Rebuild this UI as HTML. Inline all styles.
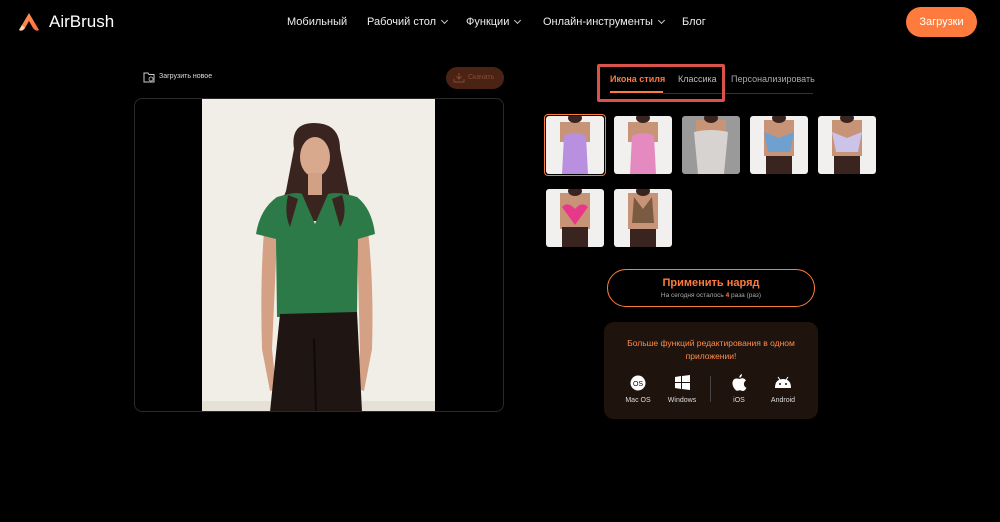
<!DOCTYPE html>
<html><head><meta charset="utf-8"><style>
*{margin:0;padding:0;box-sizing:border-box}
body{width:1000px;height:522px;background:#000;color:#fff;font-family:"Liberation Sans",sans-serif;position:relative;overflow:hidden}
.a{position:absolute}
.nav{font-size:11px;color:#eee;top:16px}
.chev{display:inline-block;width:5px;height:5px;border-right:1.2px solid #ccc;border-bottom:1.2px solid #ccc;transform:rotate(45deg);margin-left:6px;position:relative;top:-2px}
.th{position:absolute;width:58px;height:58px;border-radius:3px;overflow:hidden;background:#f1f0ee}
.tab{font-size:9px;top:74px}
.ic{position:absolute;top:374px;text-align:center;font-size:7px;color:#ddd;width:50px}
</style></head><body>
<svg class="a" style="left:18px;top:12px" width="22" height="20" viewBox="0 0 22 20"><defs><linearGradient id="lg" x1="0" y1="0" x2="1" y2="1"><stop offset="0" stop-color="#ff9a5a"/><stop offset="1" stop-color="#ff6a3a"/></linearGradient></defs><path d="M11 1 L21 18 Q18 20 15 16 L11 9 L7 16 Q4 20 1 18 Z" fill="url(#lg)"/><path d="M7 16 Q4 20 1 18 L4 13Z" fill="#ffd1b0"/></svg>
<div class="a" style="left:49px;top:12px;font-size:17px;color:#fff">AirBrush</div>
<div class="a nav" style="left:287px">Мобильный</div>
<div class="a nav" style="left:367px">Рабочий стол<span class="chev"></span></div>
<div class="a nav" style="left:466px">Функции<span class="chev"></span></div>
<div class="a nav" style="left:543px">Онлайн-инструменты<span class="chev"></span></div>
<div class="a nav" style="left:682px">Блог</div>
<div class="a" style="left:906px;top:7px;width:71px;height:30px;border-radius:15px;background:#ff7b3d;font-size:11px;line-height:30px;text-align:center">Загрузки</div>

<svg class="a" style="left:143px;top:72px" width="12" height="11" viewBox="0 0 12 11"><path d="M1 1h4l1 1.5h5v7.5H1Z" fill="none" stroke="#ccc" stroke-width="1"/><circle cx="8" cy="7" r="2" fill="none" stroke="#ccc" stroke-width=".8"/></svg>
<div class="a" style="left:159px;top:73px;font-size:7px;color:#ddd">Загрузить новое</div>
<div class="a" style="left:446px;top:67px;width:58px;height:22px;border-radius:11px;background:#4a2315;font-size:7px;color:#8a4a30;line-height:22px;padding-left:22px">Скачать</div>
<svg class="a" style="left:453px;top:72px" width="12" height="11" viewBox="0 0 12 11"><path d="M6 1v6M3.5 4.5 6 7l2.5-2.5M1 7v3h10V7" fill="none" stroke="#8a4a30" stroke-width="1"/></svg>

<div class="a" style="left:134px;top:98px;width:370px;height:314px;border:1px solid #2a2a2a;border-radius:8px;overflow:hidden;background:#000">
<svg class="a" style="left:67px;top:0" width="233" height="313" viewBox="0 0 233 313">
<rect width="233" height="313" fill="#f1eee7"/>
<rect y="302" width="233" height="11" fill="#e6e1d6"/>
<path d="M92 50 Q88 24 112 24 Q138 24 138 50 L146 90 Q152 115 142 122 L85 122 Q76 110 84 92Z" fill="#3a2420"/>
<ellipse cx="113" cy="58" rx="15" ry="20" fill="#d9a98d"/>
<rect x="106" y="74" width="14" height="22" fill="#d2a085"/>
<path d="M62 132 Q58 185 60 250 L68 292 L74 290 L70 250 L75 140Z" fill="#d4a184"/>
<path d="M166 132 Q172 185 170 250 L162 292 L156 290 L158 250 L155 140Z" fill="#d4a184"/>
<path d="M75 98 Q95 92 100 95 L113 125 L126 95 Q135 92 155 98 Q170 110 173 135 L156 140 L155 215 L75 218 L74 140 L54 135 Q58 110 75 98Z" fill="#2c7a48"/>
<path d="M86 96 Q82 115 88 128 L96 100Z M140 96 Q146 115 138 128 L130 100Z" fill="#3a2420"/>
<path d="M78 215 L155 213 L160 313 L68 313Z" fill="#1f1513"/>
<path d="M112 240 L114 313" stroke="#0f0908" stroke-width="2"/>
</svg>
</div>

<div class="a tab" style="left:610px;color:#ff7b3d;font-weight:bold">Икона стиля</div>
<div class="a" style="left:610px;top:91px;width:53px;height:2px;background:#ff7b3d"></div>
<div class="a tab" style="left:678px;color:#bbb">Классика</div>
<div class="a tab" style="left:731px;color:#aaa">Персонализировать</div>
<div class="a" style="left:663px;top:93px;width:150px;height:1px;background:#333"></div>
<div class="a" style="left:597px;top:64px;width:128px;height:38px;border:3px solid #d9534a;border-radius:2px"></div>

<div class="a" style="left:544px;top:114px;width:62px;height:62px;border:1.5px solid #ff7b3d;border-radius:4px"></div>
<div class="th" style="left:546px;top:116px"><svg width="58" height="58"><rect x="14" y="6" width="30" height="20" fill="#c89478"/><path d="M18 20 Q29 14 40 20 L42 58 L16 58Z" fill="#b98fe0"/><ellipse cx="29" cy="2" rx="7" ry="5" fill="#3a2420"/></svg></div>
<div class="th" style="left:614px;top:116px"><svg width="58" height="58"><rect x="14" y="6" width="30" height="20" fill="#c89478"/><path d="M18 20 Q29 14 40 20 L42 58 L16 58Z" fill="#e58ac0"/><ellipse cx="29" cy="2" rx="7" ry="5" fill="#3a2420"/></svg></div>
<div class="th" style="left:682px;top:116px;background:#9a9a9a"><svg width="58" height="58"><rect x="14" y="4" width="30" height="16" fill="#c89478"/><path d="M12 16 Q29 12 46 16 L42 58 L16 58Z" fill="#d6d3d0"/><ellipse cx="29" cy="2" rx="7" ry="5" fill="#3a2420"/></svg></div>
<div class="th" style="left:750px;top:116px"><svg width="58" height="58"><rect x="14" y="4" width="30" height="36" fill="#c89478"/><rect x="16" y="40" width="26" height="18" fill="#3a2420"/><path d="M14 16 L29 22 L44 16 L40 36 L18 36Z" fill="#6fa0d0"/><ellipse cx="29" cy="2" rx="7" ry="5" fill="#3a2420"/></svg></div>
<div class="th" style="left:818px;top:116px"><svg width="58" height="58"><rect x="14" y="4" width="30" height="36" fill="#c89478"/><rect x="16" y="40" width="26" height="18" fill="#3a2420"/><path d="M14 16 L29 22 L44 16 L40 36 L18 36Z" fill="#cbc3e8"/><ellipse cx="29" cy="2" rx="7" ry="5" fill="#3a2420"/></svg></div>
<div class="th" style="left:546px;top:189px"><svg width="58" height="58"><rect x="14" y="4" width="30" height="36" fill="#c89478"/><rect x="16" y="38" width="26" height="20" fill="#3a2420"/><path d="M16 18 Q22 12 29 20 Q36 12 42 18 L29 36Z" fill="#e8388a"/><ellipse cx="29" cy="2" rx="7" ry="5" fill="#3a2420"/></svg></div>
<div class="th" style="left:614px;top:189px"><svg width="58" height="58"><rect x="14" y="4" width="30" height="36" fill="#c89478"/><rect x="16" y="40" width="26" height="18" fill="#3a2420"/><path d="M20 8 L29 20 L38 8 L40 34 L18 34Z" fill="#7a5a40"/><ellipse cx="29" cy="2" rx="7" ry="5" fill="#3a2420"/></svg></div>

<div class="a" style="left:607px;top:269px;width:208px;height:38px;border:1px solid #ff7b3d;border-radius:19px;text-align:center">
<div style="font-size:11px;font-weight:bold;color:#ff7b3d;margin-top:7px">Применить наряд</div>
<div style="font-size:6.5px;color:#aaa;margin-top:3px">На сегодня осталось <b style="color:#ff7b3d">4</b> раза (раз)</div>
</div>

<div class="a" style="left:604px;top:322px;width:214px;height:97px;border-radius:10px;background:#1f130d"></div>
<div class="a" style="left:604px;top:337px;width:214px;text-align:center;font-size:8.5px;color:#ff8c4d;line-height:13px">Больше функций редактирования в одном<br>приложении!</div>
<div class="a" style="left:710px;top:376px;width:1px;height:26px;background:#444"></div>
<svg class="a" style="left:630px;top:375px" width="16" height="16"><circle cx="8" cy="8" r="7.5" fill="#fff"/><text x="8" y="11" font-size="7" text-anchor="middle" fill="#000" font-family="Liberation Sans">OS</text></svg>
<svg class="a" style="left:675px;top:375px" width="15" height="15"><path d="M0 2l6-1v6H0ZM7 1l8-1v7H7ZM0 8h6v6l-6-1ZM7 8h8v7l-8-1Z" fill="#fff"/></svg>
<svg class="a" style="left:732px;top:374px" width="15" height="17" viewBox="0 0 15 17"><path d="M10 0Q10 3 7.5 4Q7 1 10 0ZM7.5 5Q9 4 11 4.3Q13 4.8 14 6.5Q11.5 8 12 11Q12.5 13 14.5 13.8Q13 17 11 17Q10 17 8.8 16.4Q7.5 16 6 16.6Q4.5 17 3.5 16Q0 12 0.5 8.5Q1 5 4 4.5Q5.5 4.3 7.5 5Z" fill="#fff"/></svg>
<svg class="a" style="left:774px;top:376px" width="18" height="13" viewBox="0 0 18 13"><path d="M1 12Q1 3 9 3Q17 3 17 12Z" fill="#fff"/><path d="M4 1l2 3M14 1l-2 3" stroke="#fff" stroke-width="1"/><circle cx="6" cy="8" r="1" fill="#1f130d"/><circle cx="12" cy="8" r="1" fill="#1f130d"/></svg>
<div class="ic" style="left:613px;top:397px">Mac OS</div>
<div class="ic" style="left:657px;top:397px">Windows</div>
<div class="ic" style="left:714px;top:397px">iOS</div>
<div class="ic" style="left:758px;top:397px">Android</div>
</body></html>
